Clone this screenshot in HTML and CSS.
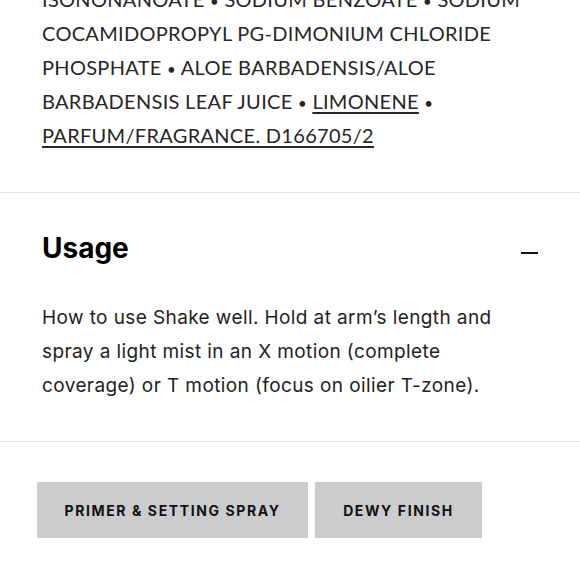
FILE: index.html
```html
<!DOCTYPE html>
<html>
<head>
<meta charset="utf-8">
<link rel="stylesheet" href="styles.css">
</head>
<body>
<div class="page">
  <section class="ingredients">
    <p class="ing-text">ISONONANOATE <span class="dot">•</span> SODIUM BENZOATE <span class="dot">•</span> SODIUM COCAMIDOPROPYL PG-DIMONIUM CHLORIDE PHOSPHATE <span class="dot">•</span> ALOE BARBADENSIS/ALOE BARBADENSIS LEAF JUICE <span class="dot">•</span> <a class="ing-link" href="#">LIMONENE</a> <span class="dot">•</span> <a class="ing-link" href="#">PARFUM/FRAGRANCE. D166705/2</a></p>
  </section>
  <section class="usage">
    <div class="usage-head">
      <h2 class="usage-title">Usage</h2>
      <span class="minus" aria-hidden="true"></span>
    </div>
    <p class="usage-text">How to use Shake well. Hold at arm’s length and spray a light mist in an X motion (complete coverage) or T motion (focus on oilier T-zone).</p>
  </section>
  <div class="tags">
    <a class="tag tag-wide" href="#">PRIMER &amp; SETTING SPRAY</a>
    <a class="tag tag-narrow" href="#">DEWY FINISH</a>
  </div>
</div>
</body>
</html>
```

FILE: styles.css
```css
html, body {
  margin: 0;
  padding: 0;
  background: #ffffff;
}
body {
  color: #1a1a1a;
  font-family: "Lato", "Liberation Sans", sans-serif;
  overflow: hidden;
}
.page {
  width: 580px;
  margin-top: -18px;
}
.ingredients {
  padding: 0 42px 40px 42px;
  border-bottom: 1px solid #e3e3e3;
}
.ing-text {
  margin: 0;
  font-family: "Lato", sans-serif;
  font-size: 20px;
  line-height: 34px;
  letter-spacing: 0.3px;
  color: #262626;
}
.dot {
  font-size: 15px;
  line-height: 0;
}
.ing-link {
  color: inherit;
  text-decoration: underline;
  text-decoration-thickness: 2px;
  text-underline-offset: 3px;
}
.usage {
  padding: 38px 42px 38px 42px;
  border-bottom: 1px solid #e3e3e3;
}
.usage-head {
  display: flex;
  align-items: center;
  justify-content: space-between;
}
.usage-title {
  margin: 0;
  font-family: "Inter", sans-serif;
  font-weight: 700;
  font-size: 28px;
  line-height: 34px;
  color: #000;
}
.minus {
  display: block;
  width: 17px;
  height: 2px;
  background: #111;
  margin-top: 10px;
}
.usage-text {
  margin: 36px 0 0 0;
  font-family: "Inter", sans-serif;
  font-size: 19px;
  line-height: 34px;
  letter-spacing: 0.4px;
  color: #222;
}
.tags {
  display: flex;
  gap: 7px;
  padding: 40px 37px 0 37px;
}
.tag {
  display: flex;
  align-items: center;
  justify-content: center;
  height: 56px;
  background: #cbcccd;
  color: #111;
  text-decoration: none;
  font-family: "Inter", sans-serif;
  font-weight: 700;
  font-size: 14px;
  letter-spacing: 1.6px;
}
.tag-wide { width: 271px; }
.tag-narrow { width: 167px; }
```
